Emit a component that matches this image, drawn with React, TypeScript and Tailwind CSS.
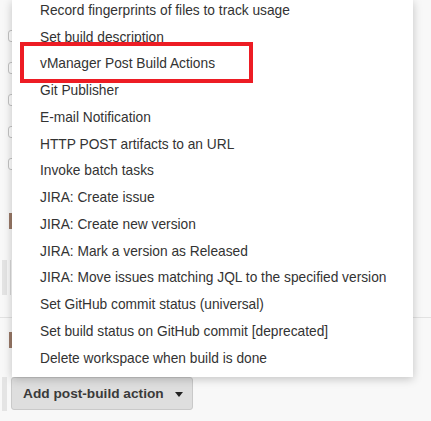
import React from 'react';

const items = [
  'Record fingerprints of files to track usage',
  'Set build description',
  'vManager Post Build Actions',
  'Git Publisher',
  'E-mail Notification',
  'HTTP POST artifacts to an URL',
  'Invoke batch tasks',
  'JIRA: Create issue',
  'JIRA: Create new version',
  'JIRA: Mark a version as Released',
  'JIRA: Move issues matching JQL to the specified version',
  'Set GitHub commit status (universal)',
  'Set build status on GitHub commit [deprecated]',
  'Delete workspace when build is done',
];

const App = () => {
  return (
    <div
      className="relative w-[431px] h-[421px] overflow-hidden bg-[#f8f8f8] text-[#333]"
      style={{ fontFamily: '"Liberation Sans", Arial, sans-serif' }}
    >
      {/* page underneath the dropdown */}
      <div className="flex flex-col">
        <div className="flex flex-col gap-[20px] pt-[30px] pl-[8px]">
          {[0, 1, 2, 3, 4].map((i) => (
            <div key={i} className="w-[13px] h-[12px] rounded-[3px] border border-[#c4c4c4] bg-white" />
          ))}
        </div>
        <div className="mt-[43px] ml-[9px] w-[3px] h-[16px] bg-[#9a7a68]" />
        <div className="mt-[31px] flex h-[35px]">
          <div className="ml-[2px] w-[5px] bg-[#e4e4e4]" />
          <div className="ml-[3px] w-[2px] border-l border-[#d8d8d8]" />
        </div>
        <div className="mt-[22px] h-px w-full bg-[#e2e2e2]" />
        <div className="mt-[14px] ml-[9px] w-[3px] h-[16px] bg-[#9a7a68]" />
        <div className="mt-[29px] flex items-start">
          <div className="ml-[2px] w-[5px] h-[34px] bg-[#e4e4e4]" />
          <button className="ml-[4px] flex items-center w-[182px] h-[33px] pt-px rounded-[3px] border border-[#c9c9c9] bg-[#dedede] pl-[11px] text-[13.7px] font-bold text-[#3a3a3a]">
            Add post-build action
            <svg width="8" height="5" viewBox="0 0 8 5" className="ml-[11px]">
              <path d="M0 0h8L4 5z" fill="#222" />
            </svg>
          </button>
        </div>
      </div>

      {/* dropdown menu */}
      <div className="absolute left-[12px] top-0 w-[401px] h-[377px] overflow-hidden bg-white shadow-[0_2px_9px_rgba(0,0,0,0.22)]">
        <ul className="mt-[-2.2px]">
          {items.map((t) => (
            <li key={t} className="h-[26.75px] flex items-center pl-[28px] text-[13.75px] whitespace-nowrap">
              {t}
            </li>
          ))}
        </ul>
      </div>

      {/* highlight box */}
      <div className="absolute left-[20px] top-[42px] w-[233px] h-[41px] border-[4px] border-[#ed1c24]" />
    </div>
  );
};

export default App;
